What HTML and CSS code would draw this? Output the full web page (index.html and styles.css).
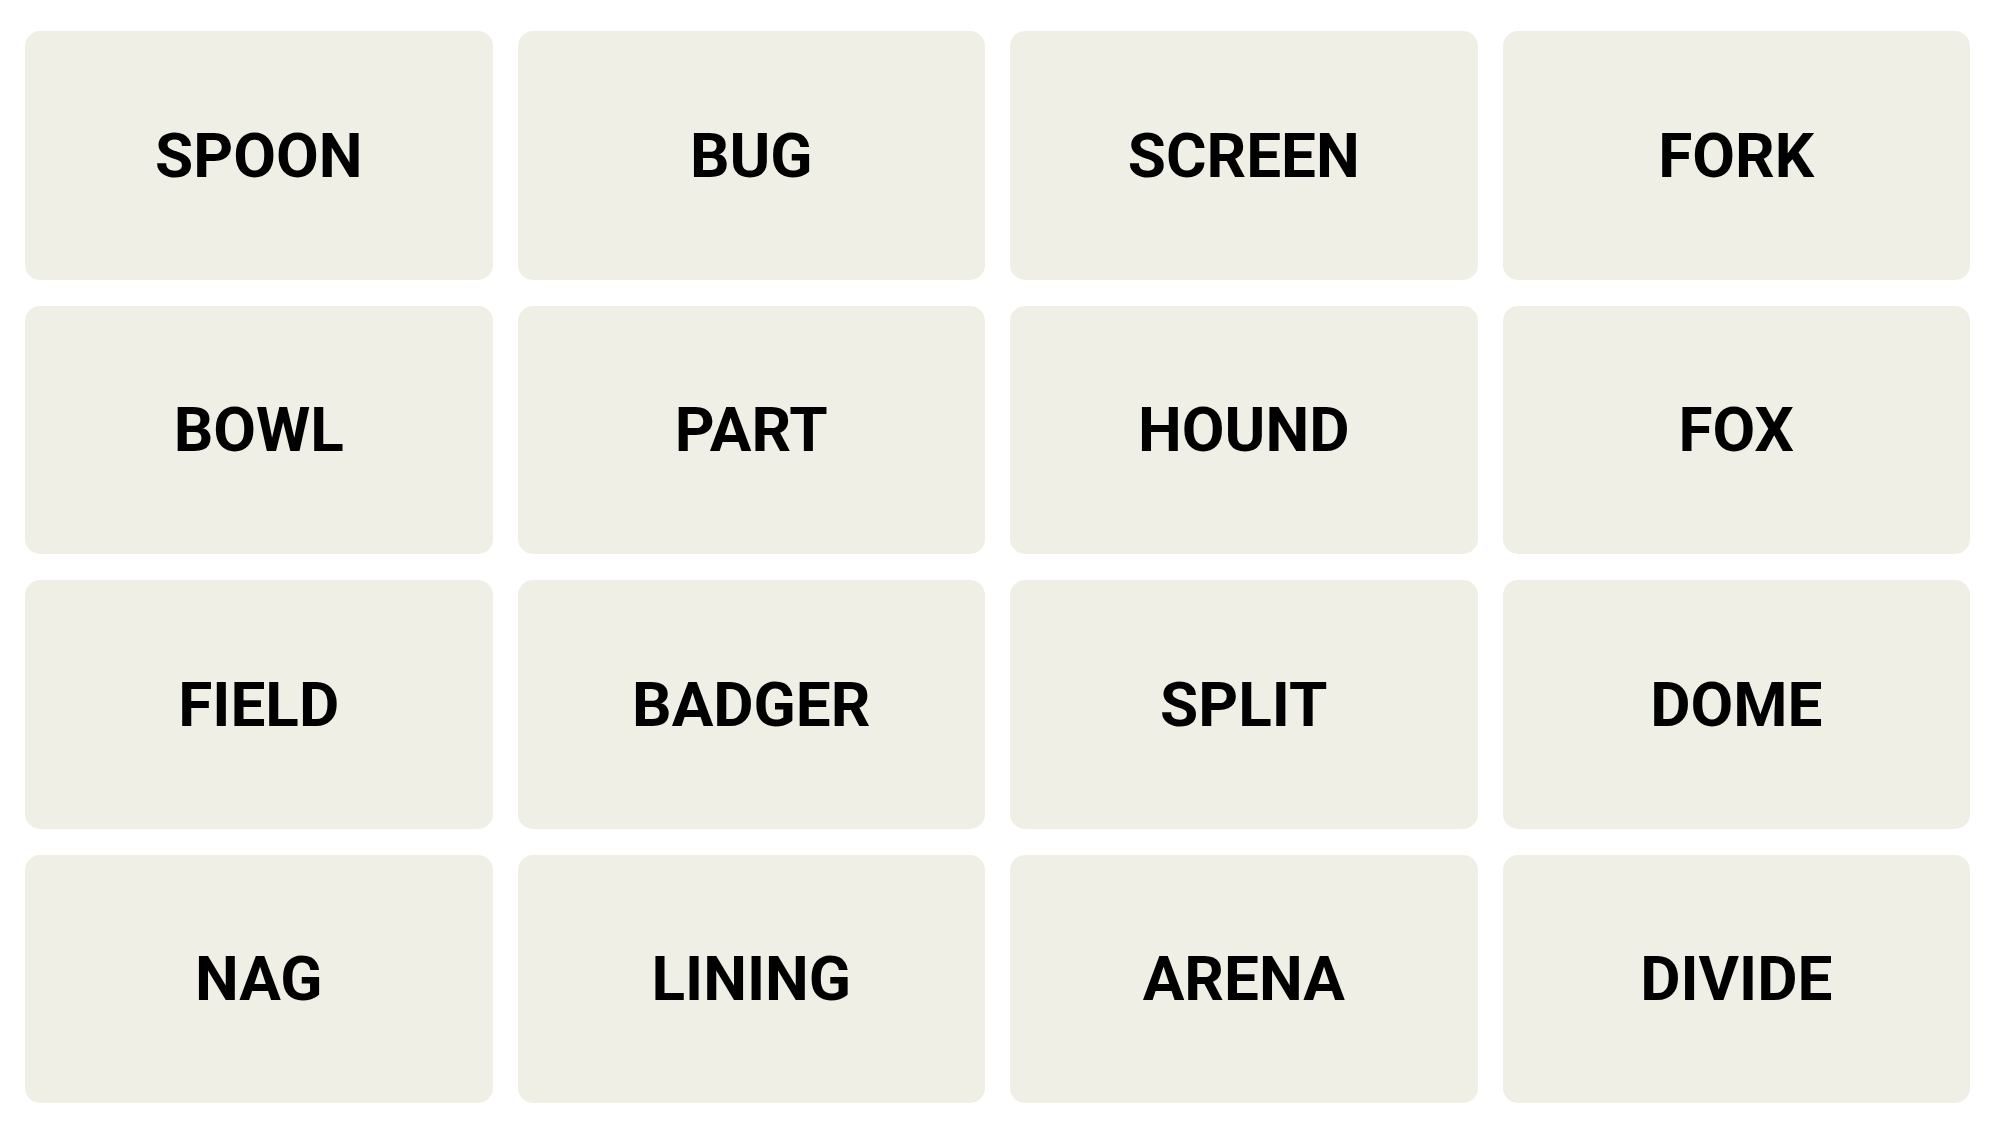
FILE: index.html
```html
<!DOCTYPE html>
<html lang="en">
<head>
    <meta charset="UTF-8">
    <meta name="viewport" content="width=device-width, initial-scale=1.0">
    <title>Connections</title>
    <link rel="stylesheet" href="styles.css">
</head>
<body>

    <!-- Word Board -->
    <div class="board">
        <div class="tile">SPOON</div>
        <div class="tile">BUG</div>
        <div class="tile">SCREEN</div>
        <div class="tile">FORK</div>

        <div class="tile">BOWL</div>
        <div class="tile">PART</div>
        <div class="tile">HOUND</div>
        <div class="tile">FOX</div>

        <div class="tile">FIELD</div>
        <div class="tile">BADGER</div>
        <div class="tile">SPLIT</div>
        <div class="tile">DOME</div>

        <div class="tile">NAG</div>
        <div class="tile">LINING</div>
        <div class="tile">ARENA</div>
        <div class="tile">DIVIDE</div>
    </div>

</body>
</html>
```

FILE: styles.css
```css
* {
    margin: 0;
    padding: 0;
    box-sizing: border-box;
}

body {
    background: #fff;
    font-family: Roboto, "Liberation Sans", Arial, sans-serif;
}

/* Board */
.board {
    display: grid;
    grid-template-columns: repeat(4, 1fr);
    grid-auto-rows: 248.5px;
    gap: 26px 25px;
    width: 1945px;
    margin: 31px 0 0 25px;
}

.tile {
    display: flex;
    align-items: center;
    justify-content: center;
    background: #efefe6;
    border-radius: 15px;
    color: #000;
    font-size: 62px;
    font-weight: 700;
    text-transform: uppercase;
    cursor: pointer;
    user-select: none;
}
```
